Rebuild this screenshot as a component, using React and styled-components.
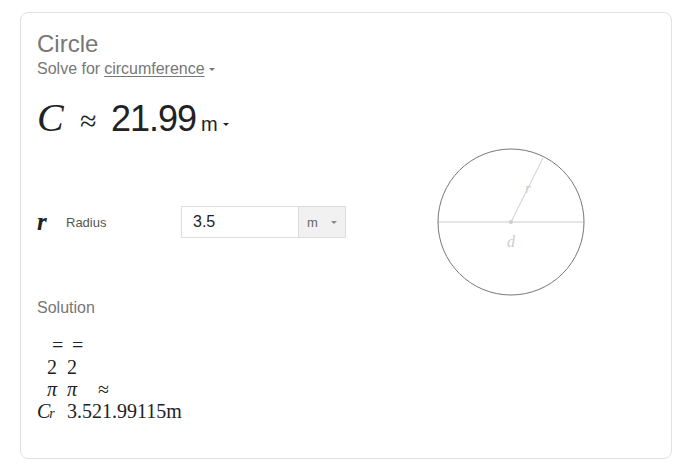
import React from "react";
import styled, { createGlobalStyle } from "styled-components";

const GlobalStyle = createGlobalStyle`
  html, body {
    margin: 0;
    padding: 0;
    background: #fff;
  }
  body {
    font-family: "Liberation Sans", Arial, sans-serif;
  }
`;

const Card = styled.div`
  box-sizing: border-box;
  width: 652px;
  height: 447px;
  margin: 12px 0 0 20px;
  padding: 17px 16px 0 16px;
  border: 1px solid #dfe1e5;
  border-radius: 8px;
`;

const Title = styled.div`
  font-size: 24px;
  line-height: 28px;
  color: #777;
`;

const SolveFor = styled.div`
  margin-top: 1px;
  font-size: 16px;
  line-height: 20px;
  color: #777;
  display: flex;
  align-items: center;
  gap: 4px;

  u {
    text-decoration: underline;
    text-underline-offset: 2px;
  }
`;

const Caret = styled.span`
  display: inline-block;
  width: 0;
  height: 0;
  border-left: ${(p) => p.$size || 3}px solid transparent;
  border-right: ${(p) => p.$size || 3}px solid transparent;
  border-top: ${(p) => p.$size || 3}px solid ${(p) => p.$color || "#777"};
`;

const Result = styled.div`
  margin-top: 17px;
  display: flex;
  align-items: baseline;
  height: 44px;
  line-height: 44px;
  color: #222;
`;

const ResultVar = styled.span`
  font-family: "Liberation Serif", "Times New Roman", serif;
  font-style: italic;
  font-size: 40px;
  width: 43px;
`;

const Approx = styled.span`
  font-family: "Liberation Serif", "Times New Roman", serif;
  font-size: 30px;
  width: 31px;
`;

const ResultValue = styled.span`
  font-size: 36px;
  letter-spacing: -1px;
`;

const ResultUnit = styled.span`
  font-size: 20px;
  margin-left: 5px;
  display: inline-flex;
  align-items: center;
  gap: 5px;
`;

const Middle = styled.div`
  margin-top: 7px;
  display: grid;
  grid-template-columns: 399px 150px;
  align-items: center;
`;

const InputRow = styled.div`
  display: flex;
  align-items: center;
`;

const VarLetter = styled.span`
  width: 29px;
  font-family: "Liberation Serif", "Times New Roman", serif;
  font-style: italic;
  font-weight: bold;
  font-size: 25px;
  color: #222;
`;

const FieldLabel = styled.span`
  width: 115px;
  font-size: 13px;
  color: #555;
`;

const Field = styled.div`
  display: flex;
  height: 32px;
`;

const ValueBox = styled.div`
  box-sizing: border-box;
  width: 117px;
  height: 32px;
  padding-left: 11px;
  border: 1px solid #ddd;
  border-right: none;
  font-size: 16px;
  line-height: 30px;
  color: #222;
`;

const UnitSelect = styled.div`
  box-sizing: border-box;
  width: 48px;
  height: 32px;
  padding: 0 8px 0 8px;
  border: 1px solid #ddd;
  background: #f1f1f1;
  display: flex;
  align-items: center;
  justify-content: space-between;
  font-size: 13px;
  color: #666;
`;

const Diagram = styled.svg`
  display: block;
`;

const SolutionLabel = styled.div`
  margin-top: 1px;
  font-size: 16px;
  line-height: 20px;
  color: #777;
`;

const MathBlock = styled.div`
  margin-top: 16px;
  font-family: "Liberation Serif", "Times New Roman", serif;
  font-size: 20px;
  color: #222;
`;

const MathLine = styled.div`
  display: flex;
  height: 22px;
  line-height: 22px;
  white-space: nowrap;
`;

const Cell = styled.span`
  width: ${(p) => p.$w}px;
  font-style: ${(p) => (p.$italic ? "italic" : "normal")};
  flex: none;
`;

const SmallR = styled.span`
  font-style: italic;
  font-size: 14px;
  margin-left: -1px;
`;

export default function App() {
  return (
    <>
      <GlobalStyle />
      <Card>
        <Title>Circle</Title>
        <SolveFor>
          Solve for <u>circumference</u>
          <Caret />
        </SolveFor>
        <Result>
          <ResultVar>C</ResultVar>
          <Approx>≈</Approx>
          <ResultValue>21.99</ResultValue>
          <ResultUnit>
            m
            <Caret $color="#222" />
          </ResultUnit>
        </Result>
        <Middle>
          <InputRow>
            <VarLetter>r</VarLetter>
            <FieldLabel>Radius</FieldLabel>
            <Field>
              <ValueBox>3.5</ValueBox>
              <UnitSelect>
                m
                <Caret $color="#888" />
              </UnitSelect>
            </Field>
          </InputRow>
          <Diagram width="150" height="150" viewBox="0 0 150 150">
            <line x1="2" y1="75" x2="148" y2="75" stroke="#ccc" strokeWidth="1" />
            <line x1="75" y1="75" x2="107" y2="11" stroke="#ccc" strokeWidth="1" />
            <circle cx="75" cy="75" r="2" fill="#ccc" />
            <circle cx="75" cy="75" r="73" fill="none" stroke="#777" strokeWidth="1" />
            <text
              x="89"
              y="46"
              fill="#ccc"
              fontFamily="Liberation Serif, serif"
              fontStyle="italic"
              fontSize="15"
            >
              r
            </text>
            <text
              x="71"
              y="100"
              fill="#ccc"
              fontFamily="Liberation Serif, serif"
              fontStyle="italic"
              fontSize="16"
            >
              d
            </text>
          </Diagram>
        </Middle>
        <SolutionLabel>Solution</SolutionLabel>
        <MathBlock>
          <MathLine>
            <Cell $w={15} />
            <Cell $w={20}>=</Cell>
            <Cell $w={20}>=</Cell>
          </MathLine>
          <MathLine>
            <Cell $w={10} />
            <Cell $w={20}>2</Cell>
            <Cell $w={20}>2</Cell>
          </MathLine>
          <MathLine>
            <Cell $w={10} />
            <Cell $w={20} $italic>π</Cell>
            <Cell $w={31} $italic>π</Cell>
            <Cell $w={20}>≈</Cell>
          </MathLine>
          <MathLine>
            <Cell $w={30} $italic>
              C<SmallR>r</SmallR>
            </Cell>
            <Cell $w={140}>3.521.99115m</Cell>
          </MathLine>
        </MathBlock>
      </Card>
    </>
  );
}
